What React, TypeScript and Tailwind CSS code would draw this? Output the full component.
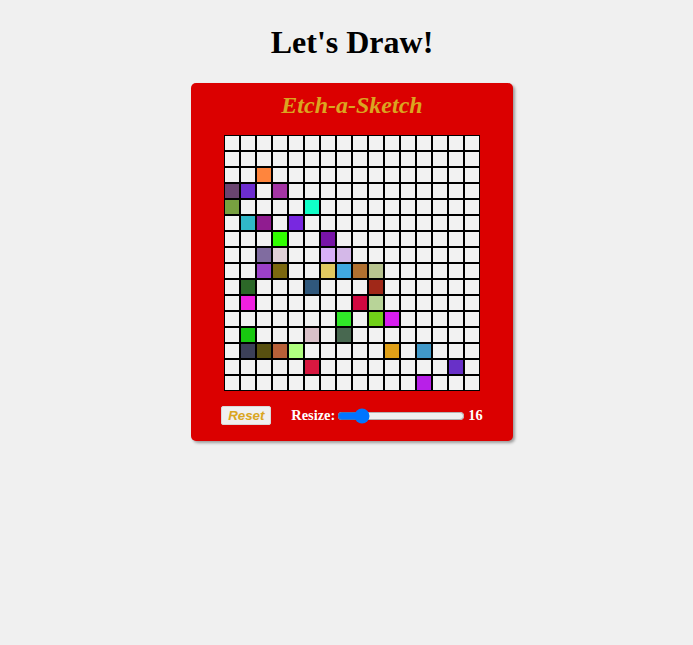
import React, { useState } from 'react';

const SIZE = 16;

// painted squares: "row,col" -> colour
const painted: Record<string, string> = {
  '2,2': '#ff853d',
  '3,0': '#6a4470',
  '3,1': '#6d2dd0',
  '3,3': '#a535a5',
  '4,0': '#78a040',
  '4,5': '#10ffc8',
  '5,1': '#30b8c8',
  '5,2': '#901c90',
  '5,4': '#7828e0',
  '6,3': '#30ff00',
  '6,6': '#7814a8',
  '7,2': '#806ca0',
  '7,3': '#e0d0d8',
  '7,6': '#d8b0f8',
  '7,7': '#d4b8e8',
  '8,2': '#9c40c8',
  '8,3': '#7c6810',
  '8,6': '#e0c860',
  '8,7': '#40a8e0',
  '8,8': '#b07030',
  '8,9': '#b8c490',
  '9,1': '#2c6828',
  '9,5': '#30587c',
  '9,9': '#a02818',
  '10,1': '#f020e0',
  '10,8': '#d00840',
  '10,9': '#b8d498',
  '11,7': '#30e828',
  '11,9': '#70d018',
  '11,10': '#d81ef0',
  '12,1': '#18c810',
  '12,5': '#d8c0c8',
  '12,7': '#486850',
  '13,1': '#3c4058',
  '13,2': '#585010',
  '13,3': '#b86038',
  '13,4': '#b0ff80',
  '13,10': '#e0a018',
  '13,12': '#4098c8',
  '14,5': '#d81840',
  '14,14': '#6830c8',
  '15,12': '#b820e8',
};

const App: React.FC = () => {
  const [size, setSize] = useState(SIZE);
  const [cells, setCells] = useState<Record<string, string>>(painted);

  const cellList = [];
  for (let r = 0; r < SIZE; r++) {
    for (let c = 0; c < SIZE; c++) {
      const key = `${r},${c}`;
      cellList.push(
        <div
          key={key}
          className="w-[14px] h-[14px] bg-[#f2f2f2]"
          style={cells[key] ? { backgroundColor: cells[key] } : undefined}
        />
      );
    }
  }

  return (
    <div className="min-h-[645px] bg-[#f0f0f0] pl-[11px] flex flex-col items-center font-['Liberation_Serif',serif]">
      <h1 className="mt-[24px] text-[32px] leading-[36px] font-bold text-black">Let's Draw!</h1>

      <div className="mt-[23px] w-[322px] bg-[#db0000] rounded-[5px] shadow-[2px_2px_3px_rgba(0,0,0,0.35)] pt-[8px] pb-[16px] flex flex-col items-center">
        <h2 className="text-[24px] leading-[28px] font-bold italic text-[#daa520]">Etch-a-Sketch</h2>

        <div className="mt-[16px] grid grid-cols-[repeat(16,14px)] gap-[2px] p-[1px] bg-black">
          {cellList}
        </div>

        <div className="mt-[15px] flex items-center h-[19px]">
          <button
            onClick={() => setCells({})}
            className="w-[50px] h-[19px] bg-[#f0f0f0] rounded-[2px] border border-[#d8d8d8] font-['Liberation_Sans',sans-serif] text-[13.33px] font-bold italic text-[#daa520] leading-none"
          >
            Reset
          </button>
          <span className="ml-[20px] text-[14.4px] font-bold text-white">Resize:</span>
          <input
            type="range"
            min={1}
            max={100}
            value={size}
            onChange={(e) => setSize(Number(e.target.value))}
            className="ml-[2px] w-[128px] h-[16px]"
          />
          <span className="ml-[3px] text-[14.4px] font-bold text-white">{size}</span>
        </div>
      </div>
    </div>
  );
};

export default App;
